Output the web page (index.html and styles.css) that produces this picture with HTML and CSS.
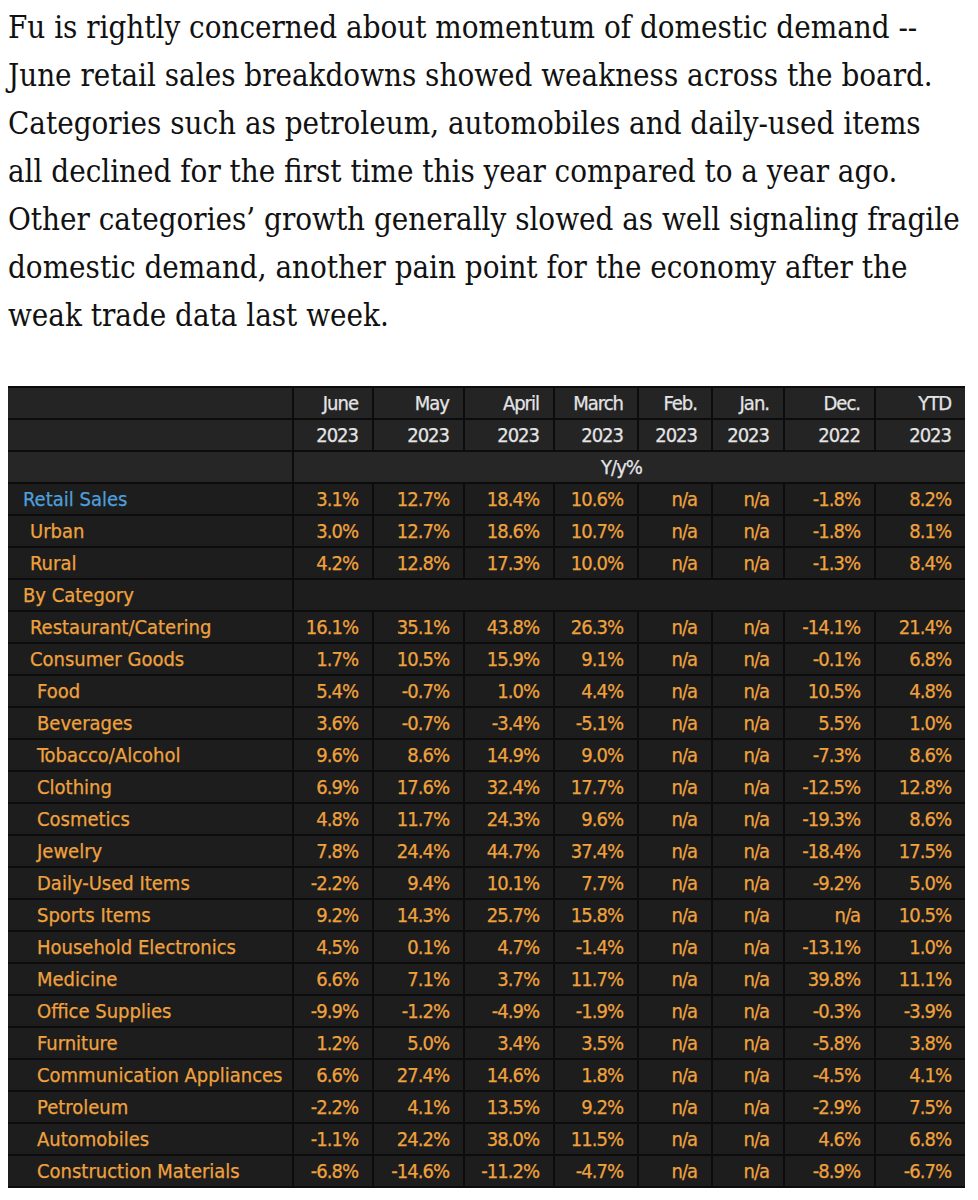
FILE: index.html
```html
<!DOCTYPE html>
<html lang="en">
<head>
<meta charset="utf-8">
<title>Retail sales breakdown</title>
<link rel="stylesheet" href="styles.css">
</head>
<body>
<article class="post">
  <p class="lede">Fu is rightly concerned about momentum of domestic demand -- June retail sales breakdowns showed weakness across the board. Categories such as petroleum, automobiles and daily-used items all declined for the first time this year compared to a year ago. Other categories’ growth generally slowed as well signaling fragile domestic demand, another pain point for the economy after the weak trade data last week.</p>

  <figure class="chart">
    <table class="terminal">
      <colgroup>
        <col class="c-label"><col class="c-jun"><col class="c-may"><col class="c-apr"><col class="c-mar"><col class="c-feb"><col class="c-jan"><col class="c-dec"><col class="c-ytd">
      </colgroup>
      <thead>
        <tr class="head">
          <th></th><th>June</th><th>May</th><th>April</th><th>March</th><th>Feb.</th><th>Jan.</th><th>Dec.</th><th>YTD</th>
        </tr>
        <tr class="head">
          <th></th><th>2023</th><th>2023</th><th>2023</th><th>2023</th><th>2023</th><th>2023</th><th>2022</th><th>2023</th>
        </tr>
        <tr class="head unit">
          <th></th><th colspan="8" class="span">Y/y%</th>
        </tr>
      </thead>
      <tbody>
        <tr><td class="lbl l0 blue">Retail Sales</td><td>3.1%</td><td>12.7%</td><td>18.4%</td><td>10.6%</td><td>n/a</td><td>n/a</td><td>-1.8%</td><td>8.2%</td></tr>
        <tr><td class="lbl l1">Urban</td><td>3.0%</td><td>12.7%</td><td>18.6%</td><td>10.7%</td><td>n/a</td><td>n/a</td><td>-1.8%</td><td>8.1%</td></tr>
        <tr><td class="lbl l1">Rural</td><td>4.2%</td><td>12.8%</td><td>17.3%</td><td>10.0%</td><td>n/a</td><td>n/a</td><td>-1.3%</td><td>8.4%</td></tr>
        <tr><td class="lbl l0">By Category</td><td colspan="8"></td></tr>
        <tr><td class="lbl l1">Restaurant/Catering</td><td>16.1%</td><td>35.1%</td><td>43.8%</td><td>26.3%</td><td>n/a</td><td>n/a</td><td>-14.1%</td><td>21.4%</td></tr>
        <tr><td class="lbl l1">Consumer Goods</td><td>1.7%</td><td>10.5%</td><td>15.9%</td><td>9.1%</td><td>n/a</td><td>n/a</td><td>-0.1%</td><td>6.8%</td></tr>
        <tr><td class="lbl l2">Food</td><td>5.4%</td><td>-0.7%</td><td>1.0%</td><td>4.4%</td><td>n/a</td><td>n/a</td><td>10.5%</td><td>4.8%</td></tr>
        <tr><td class="lbl l2">Beverages</td><td>3.6%</td><td>-0.7%</td><td>-3.4%</td><td>-5.1%</td><td>n/a</td><td>n/a</td><td>5.5%</td><td>1.0%</td></tr>
        <tr><td class="lbl l2">Tobacco/Alcohol</td><td>9.6%</td><td>8.6%</td><td>14.9%</td><td>9.0%</td><td>n/a</td><td>n/a</td><td>-7.3%</td><td>8.6%</td></tr>
        <tr><td class="lbl l2">Clothing</td><td>6.9%</td><td>17.6%</td><td>32.4%</td><td>17.7%</td><td>n/a</td><td>n/a</td><td>-12.5%</td><td>12.8%</td></tr>
        <tr><td class="lbl l2">Cosmetics</td><td>4.8%</td><td>11.7%</td><td>24.3%</td><td>9.6%</td><td>n/a</td><td>n/a</td><td>-19.3%</td><td>8.6%</td></tr>
        <tr><td class="lbl l2">Jewelry</td><td>7.8%</td><td>24.4%</td><td>44.7%</td><td>37.4%</td><td>n/a</td><td>n/a</td><td>-18.4%</td><td>17.5%</td></tr>
        <tr><td class="lbl l2">Daily-Used Items</td><td>-2.2%</td><td>9.4%</td><td>10.1%</td><td>7.7%</td><td>n/a</td><td>n/a</td><td>-9.2%</td><td>5.0%</td></tr>
        <tr><td class="lbl l2">Sports Items</td><td>9.2%</td><td>14.3%</td><td>25.7%</td><td>15.8%</td><td>n/a</td><td>n/a</td><td>n/a</td><td>10.5%</td></tr>
        <tr><td class="lbl l2">Household Electronics</td><td>4.5%</td><td>0.1%</td><td>4.7%</td><td>-1.4%</td><td>n/a</td><td>n/a</td><td>-13.1%</td><td>1.0%</td></tr>
        <tr><td class="lbl l2">Medicine</td><td>6.6%</td><td>7.1%</td><td>3.7%</td><td>11.7%</td><td>n/a</td><td>n/a</td><td>39.8%</td><td>11.1%</td></tr>
        <tr><td class="lbl l2">Office Supplies</td><td>-9.9%</td><td>-1.2%</td><td>-4.9%</td><td>-1.9%</td><td>n/a</td><td>n/a</td><td>-0.3%</td><td>-3.9%</td></tr>
        <tr><td class="lbl l2">Furniture</td><td>1.2%</td><td>5.0%</td><td>3.4%</td><td>3.5%</td><td>n/a</td><td>n/a</td><td>-5.8%</td><td>3.8%</td></tr>
        <tr><td class="lbl l2">Communication Appliances</td><td>6.6%</td><td>27.4%</td><td>14.6%</td><td>1.8%</td><td>n/a</td><td>n/a</td><td>-4.5%</td><td>4.1%</td></tr>
        <tr><td class="lbl l2">Petroleum</td><td>-2.2%</td><td>4.1%</td><td>13.5%</td><td>9.2%</td><td>n/a</td><td>n/a</td><td>-2.9%</td><td>7.5%</td></tr>
        <tr><td class="lbl l2">Automobiles</td><td>-1.1%</td><td>24.2%</td><td>38.0%</td><td>11.5%</td><td>n/a</td><td>n/a</td><td>4.6%</td><td>6.8%</td></tr>
        <tr><td class="lbl l2">Construction Materials</td><td>-6.8%</td><td>-14.6%</td><td>-11.2%</td><td>-4.7%</td><td>n/a</td><td>n/a</td><td>-8.9%</td><td>-6.7%</td></tr>
      </tbody>
    </table>
  </figure>
</article>
</body>
</html>
```

FILE: styles.css
```css
html, body {
  margin: 0;
  padding: 0;
  background: #ffffff;
}

body {
  padding: 3px 8px 0 8px;
}

.post {
  width: 962px;
}

.lede {
  margin: 0;
  width: 953px;
  font-family: "DejaVu Serif Condensed", "DejaVu Serif", serif;
  font-size: 31px;
  line-height: 48px;
  color: #111111;
}

.chart {
  margin: 47px 0 0 0;
  padding: 0;
}

.terminal {
  table-layout: fixed;
  width: 957px;
  border-collapse: collapse;
  background: #1d1d1d;
  border-top: 2px solid #0b0b0b;
  border-bottom: 2px solid #0b0b0b;
  font-family: "DejaVu Sans Condensed", "Liberation Sans Narrow", "DejaVu Sans", sans-serif;
  font-size: 20px;
  color: #efa23e;
  -webkit-text-stroke: 0.25px currentColor;
}

.c-label { width: 285px; }
.c-jun { width: 80px; }
.c-may { width: 91px; }
.c-apr { width: 90px; }
.c-mar { width: 84px; }
.c-feb { width: 74px; }
.c-jan { width: 72px; }
.c-dec { width: 91px; }
.c-ytd { width: 90px; }

.terminal tr {
  height: 32px;
}

.terminal th,
.terminal td {
  padding: 0 14px 0 0;
  text-align: right;
  vertical-align: middle;
  border: 2px solid #0c0c0c;
  white-space: nowrap;
  letter-spacing: -1px;
  line-height: 28px;
}

.terminal tr > :first-child {
  border-left: 0;
}

.terminal tr > :last-child {
  border-right: 0;
}

.head th {
  background: #242424;
  color: #e4e4e6;
  font-weight: normal;
}

.unit th {
  background: #262626;
}

.terminal th.span {
  text-align: center;
  padding: 0 16px 0 0;
}

.terminal td.lbl {
  text-align: left;
  letter-spacing: 0;
}

.terminal td.lbl.l0 { padding-left: 15px; }
.terminal td.lbl.l1 { padding-left: 22px; }
.terminal td.lbl.l2 { padding-left: 29px; }

.blue {
  color: #4f9fdc;
}
```
